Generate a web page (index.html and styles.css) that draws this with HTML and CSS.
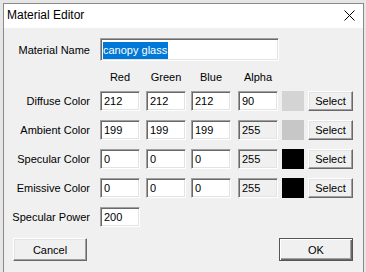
FILE: index.html
```html
<!DOCTYPE html>
<html lang="en">
<head>
  <meta charset="UTF-8">
  <title>Material Editor</title>
  <link rel="stylesheet" href="styles.css">
</head>
<body>
  <div class="dialog">
    <div class="titlebar">
      <span class="title">Material Editor</span>
      <svg class="close" width="11" height="11" viewBox="0 0 11 11">
        <path d="M0.5 0.5 L10.5 10.5 M10.5 0.5 L0.5 10.5" stroke="#000" stroke-width="1" fill="none"/>
      </svg>
    </div>

    <div class="content">
      <div class="name-row">
        <span class="label">Material Name</span>
        <span class="field name"><span class="sel">canopy glass</span></span>
      </div>

      <div class="grid">
        <span></span>
        <span class="head">Red</span>
        <span class="head">Green</span>
        <span class="head">Blue</span>
        <span class="head">Alpha</span>
        <span></span>
        <span></span>

        <span class="label">Diffuse Color</span>
        <span class="field">212</span>
        <span class="field">212</span>
        <span class="field">212</span>
        <span class="field">90</span>
        <span class="swatch" style="background:#d4d4d4"></span>
        <span class="btn">Select</span>

        <span class="label">Ambient Color</span>
        <span class="field">199</span>
        <span class="field">199</span>
        <span class="field">199</span>
        <span class="field off">255</span>
        <span class="swatch" style="background:#c7c7c7"></span>
        <span class="btn">Select</span>

        <span class="label">Specular Color</span>
        <span class="field">0</span>
        <span class="field">0</span>
        <span class="field">0</span>
        <span class="field off">255</span>
        <span class="swatch" style="background:#000"></span>
        <span class="btn">Select</span>

        <span class="label">Emissive Color</span>
        <span class="field">0</span>
        <span class="field">0</span>
        <span class="field">0</span>
        <span class="field off">255</span>
        <span class="swatch" style="background:#000"></span>
        <span class="btn">Select</span>
      </div>

      <div class="power-row">
        <span class="label">Specular Power</span>
        <span class="field">200</span>
      </div>

      <div class="buttons">
        <span class="btn big">Cancel</span>
        <span class="btn big default">OK</span>
      </div>
    </div>
  </div>
</body>
</html>
```

FILE: styles.css
```css
* {
  box-sizing: border-box;
}

body {
  margin: 0;
  background: #e6e6e6;
  font-family: "Liberation Sans", Arial, sans-serif;
  font-size: 11px;
  color: #000;
}

.dialog {
  margin: 3px 2px 0 3px;
  height: 275px;
  border: 1px solid #8a8a8a;
  border-bottom: none;
  background: #f0f0f0;
}

.titlebar {
  display: flex;
  align-items: center;
  justify-content: space-between;
  height: 24px;
  padding: 0 8px 2px 3px;
  background: #fff;
}

.title {
  font-size: 12px;
}

.close {
  display: block;
  margin-top: 1px;
}

.content {
  padding: 10px 10px 0 0;
}

.label {
  display: block;
  text-align: right;
  padding-right: 10px;
  white-space: nowrap;
}

.name-row,
.power-row {
  display: grid;
  grid-template-columns: 96px auto;
  align-items: center;
  justify-content: start;
}

.field {
  display: block;
  width: 40px;
  height: 20px;
  padding: 2px 0 0 3px;
  line-height: 14px;
  background: #fff;
  border: 1px solid;
  border-color: #a0a0a0 #fff #fff #a0a0a0;
  box-shadow: inset 1px 1px #696969, inset -1px -1px #e3e3e3;
}

.field.off {
  background: #f0f0f0;
}

.field.name {
  width: 179px;
  height: 23px;
  padding: 3px 0 0 2px;
}

.sel {
  display: inline-block;
  padding: 2px 1px 2px 0;
  line-height: 13px;
  background: #0078d7;
  color: #fff;
}

.grid {
  display: grid;
  grid-template-columns: 96px 46px 45px 47px 44px 26px 45px;
  grid-template-rows: 11px repeat(4, 20px);
  row-gap: 9px;
  align-items: center;
  margin-top: 10px;
}

.head {
  line-height: 12px;
  text-align: center;
  width: 40px;
}

.swatch {
  display: block;
  width: 22px;
  height: 20px;
}

.btn {
  display: flex;
  align-items: center;
  justify-content: center;
  width: 45px;
  height: 20px;
  background: #f0f0f0;
  border: 1px solid;
  border-color: #fff #696969 #696969 #fff;
  box-shadow: inset -1px -1px #a0a0a0, inset 1px 1px #e3e3e3;
}

.power-row {
  margin-top: 9px;
}

.buttons {
  display: flex;
  justify-content: space-between;
  margin-top: 11px;
  padding-left: 9px;
}

.btn.big {
  width: 74px;
  height: 23px;
}

.btn.default {
  border-color: #555;
  box-shadow: inset 1px 1px #fff, inset -1px -1px #696969, inset -2px -2px #a0a0a0;
}
```
